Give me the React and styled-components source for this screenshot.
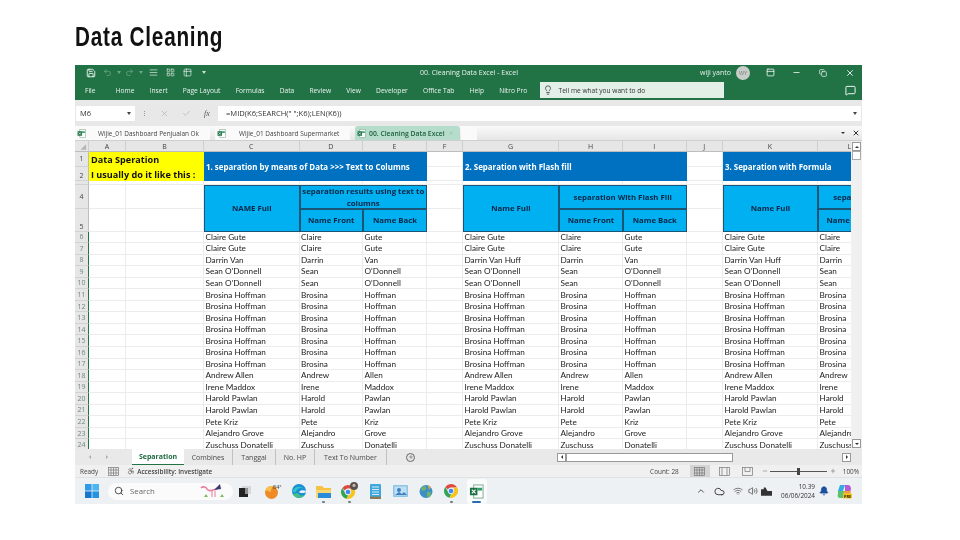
import styled, { createGlobalStyle } from 'styled-components';
import { Save, Undo2, Redo2, Lightbulb, MessageSquare, X, Minus, Check, Search, Bell, ChevronUp, Cloud, Wifi, Volume2, Plus, Copy, PanelTop, AlignJustify, Table2, LayoutGrid, Accessibility } from 'lucide-react';

const GlobalStyle = createGlobalStyle`
  html, body { margin: 0; padding: 0; background: #fff; }
  body { font-family: "Open Sans", "Noto Sans", sans-serif; color: #222; }
`;

const Page = styled.div`
  width: 960px;
  height: 540px;
  padding: 0 98px 0 75px;
  box-sizing: border-box;
  overflow: hidden;
`;

const Title = styled.h1`
  margin: 0;
  height: 65px;
  padding-top: 20px;
  box-sizing: border-box;
  font: bold 28px/34px "Liberation Sans", sans-serif;
`;

const TitleText = styled.span`
  display: inline-block;
  letter-spacing: 1.05px;
  color: #111;
  transform: scaleX(0.74);
  transform-origin: left center;
`;

const Win = styled.div`
  width: 787px;
  height: 439px;
  display: flex;
  flex-direction: column;
  overflow: hidden;
  filter: blur(0.35px);
`;

const TitleBar = styled.div`
  height: 15px;
  flex: none;
  display: flex;
  align-items: center;
  background: #217346;
  color: #e8f2ec;
  font-size: 7px;
`;

const QuickAccess = styled.div`
  width: 345px;
  flex: none;
  display: flex;
  align-items: center;
  padding-left: 8px;
  box-sizing: border-box;
`;

const QuickBtn = styled.div`
  width: ${({ $w }) => $w}px;
  flex: none;
  display: flex;
  align-items: center;
  justify-content: center;
`;

const WindowTitle = styled.div`
  flex: 1;
  white-space: nowrap;
`;

const WindowButtons = styled.div`
  display: flex;
  align-items: center;
  margin-right: -1px;
`;

const UserName = styled.span`
  margin-right: 5px;
  white-space: nowrap;
`;

const Avatar = styled.div`
  width: 14px;
  height: 14px;
  border-radius: 50%;
  background: #c9cdca;
  color: #7c807d;
  font-size: 5.5px;
  display: flex;
  align-items: center;
  justify-content: center;
  margin-right: 7px;
`;

const WinBtn = styled.div`
  width: 26.5px;
  display: flex;
  justify-content: center;
`;

const Ribbon = styled.div`
  height: 20px;
  flex: none;
  display: flex;
  align-items: center;
  gap: 15.2px;
  padding-left: 10px;
  background: #217346;
  color: #eaf3ee;
  font-size: 6.65px;
  white-space: nowrap;
`;

const FileTab = styled.span`
  margin-right: 5px;
`;

const TellMe = styled.div`
  width: 184px;
  height: 16px;
  margin-left: -3px;
  flex: none;
  display: flex;
  align-items: center;
  gap: 6px;
  padding-left: 3px;
  box-sizing: border-box;
  background: #e3f0e8;
  color: #333;
  font-size: 6.6px;
`;

const CommentSlot = styled.div`
  margin-left: auto;
  padding-right: 6px;
  display: flex;
`;

const FormulaRow = styled.div`
  height: 26px;
  flex: none;
  display: flex;
  align-items: center;
  background: #e8e8e8;
  padding: 0 1px;
  box-sizing: border-box;
`;

const NameBox = styled.div`
  width: 59px;
  height: 15px;
  background: #fff;
  display: flex;
  align-items: center;
  justify-content: space-between;
  padding: 0 4px;
  box-sizing: border-box;
  font-size: 7.5px;
  color: #333;
`;

const Caret = styled.span`
  width: 0;
  height: 0;
  border-left: 2.5px solid transparent;
  border-right: 2.5px solid transparent;
  border-top: 3px solid ${({ $color }) => $color || '#444'};
`;

const FormulaTools = styled.div`
  width: 83px;
  height: 15px;
  flex: none;
  display: flex;
  align-items: center;
  gap: 13px;
  padding-left: 9px;
  box-sizing: border-box;
  color: #b5b5b5;
`;

const Grip = styled.span`
  width: 1px;
  height: 5px;
  margin-right: 1px;
  border-left: 1px dotted #999;
`;

const FxLabel = styled.span`
  font: italic 8px "Liberation Serif", serif;
  color: #555;
`;

const FormulaInput = styled.div`
  flex: 1;
  height: 15px;
  background: #fff;
  display: flex;
  align-items: center;
  justify-content: space-between;
  padding: 0 4px 0 8px;
  font-size: 7.6px;
  color: #333;
`;

const TabStrip = styled.div`
  height: 15px;
  flex: none;
  display: flex;
  align-items: flex-end;
  background: linear-gradient(#fafafa, #e6e6e6);
  border-bottom: 1px solid #cfcfcf;
  box-sizing: border-box;
`;

const BookTab = styled.div`
  width: ${({ $w }) => $w}px;
  height: 14px;
  margin-right: ${({ $gap }) => $gap || 0}px;
  flex: none;
  display: flex;
  align-items: center;
  gap: ${({ $inner }) => $inner || 0}px;
  padding-left: 2px;
  box-sizing: border-box;
  background: ${({ $active }) => ($active ? '#b6dccb' : '#fafafa')};
  border-radius: 3px 3px 0 0;
  font-size: ${({ $active }) => ($active ? 6.8 : 6.45)}px;
  font-weight: ${({ $active }) => ($active ? 600 : 400)};
  color: ${({ $active }) => ($active ? '#1d5f3c' : '#444')};
  white-space: nowrap;
`;

const StripEnd = styled.div`
  margin-left: auto;
  height: 14px;
  display: flex;
  align-items: center;
  gap: 7px;
  padding-right: 2px;
`;

const Workarea = styled.div`
  height: 308px;
  flex: none;
  display: flex;
  background: #fff;
`;

const SheetClip = styled.div`
  width: 776px;
  overflow: hidden;
`;

const Sheet = styled.div`
  width: 905px;
  display: grid;
  grid-template-columns: 14px 37px 78px 95.5px 63.5px 64px 36px 96px 64px 63.5px 36.5px 95px 63.5px 64px;
  grid-template-rows: 11px 14.5px 14px 4.5px 24px 22.5px repeat(19, 11.55px);
  font-family: Lato, "Open Sans", sans-serif;
  font-size: 8.2px;
  color: #222;
`;

const ColHead = styled.div`
  background: #e6e6e6;
  border-right: 1px solid #cfcfcf;
  border-bottom: 1px solid #bdbdbd;
  display: flex;
  align-items: center;
  justify-content: center;
  font-family: "Open Sans", sans-serif;
  font-size: 7px;
  color: #444;
`;

const RowHead = styled.div`
  background: #e6e6e6;
  border-bottom: 1px solid #d2d2d2;
  border-right: ${({ $selected }) => ($selected ? '1px solid #217346' : '1px solid #bdbdbd')};
  display: flex;
  align-items: ${({ $low }) => ($low ? 'flex-end' : 'center')};
  justify-content: center;
  font-family: "Open Sans", sans-serif;
  font-size: 7px;
  line-height: 9px;
  color: ${({ $selected }) => ($selected ? '#6f8a7a' : '#444')};
  box-sizing: border-box;
`;

const Cell = styled.div`
  border-right: 1px solid #ececec;
  border-bottom: 1px solid #ececec;
  box-sizing: border-box;
  padding-left: 1.5px;
  display: flex;
  align-items: center;
  white-space: nowrap;
  overflow: hidden;
`;

const Note = styled.div`
  grid-column: span 2;
  grid-row: span 2;
  background: #ffff00;
  color: #111;
  font-family: "Open Sans", sans-serif;
  font-size: 9.1px;
  font-weight: 700;
  line-height: 15px;
  padding: 1px 2px 0;
  display: flex;
  flex-direction: column;
  justify-content: center;
  white-space: nowrap;
`;

const Banner = styled.div`
  grid-column: span ${({ $span }) => $span};
  grid-row: span 2;
  background: #0070c0;
  color: #fff;
  font-family: "Open Sans", sans-serif;
  font-size: 7.9px;
  font-weight: 700;
  padding: 1px 0 0 2px;
  display: flex;
  align-items: center;
  white-space: nowrap;
`;

const HeaderCell = styled.div`
  grid-column: span ${({ $cols }) => $cols || 1};
  grid-row: span ${({ $rows }) => $rows || 1};
  background: #00b0f0;
  border: 1px solid #1b5576;
  box-sizing: border-box;
  color: #0b2545;
  font-family: "Open Sans", sans-serif;
  font-size: 7.8px;
  font-weight: 700;
  line-height: 12px;
  display: flex;
  align-items: center;
  justify-content: center;
  text-align: center;
`;

const VScroll = styled.div`
  width: 11px;
  flex: none;
  display: flex;
  flex-direction: column;
  background: #f0f0f0;
  align-items: center;
  padding: 1px 0;
  box-sizing: border-box;
`;

const ArrowBtn = styled.div`
  width: 9px;
  height: 9px;
  flex: none;
  background: #fff;
  border: 0.5px solid #999;
  box-sizing: border-box;
  display: flex;
  align-items: center;
  justify-content: center;
`;

const VThumb = styled.div`
  width: 9px;
  height: 9px;
  background: #fff;
  border: 0.5px solid #aaa;
  box-sizing: border-box;
`;

const Spacer = styled.div`
  flex: 1;
`;

const Triangle = styled.span`
  width: 0;
  height: 0;
  ${({ $dir, $size = 2, $color = '#333' }) =>
    $dir === 'up'
      ? `border-left:${$size}px solid transparent;border-right:${$size}px solid transparent;border-bottom:${$size}px solid ${$color};`
      : $dir === 'down'
      ? `border-left:${$size}px solid transparent;border-right:${$size}px solid transparent;border-top:${$size}px solid ${$color};`
      : $dir === 'left'
      ? `border-top:${$size}px solid transparent;border-bottom:${$size}px solid transparent;border-right:${$size}px solid ${$color};`
      : `border-top:${$size}px solid transparent;border-bottom:${$size}px solid transparent;border-left:${$size}px solid ${$color};`}
`;

const SheetTabs = styled.div`
  height: 16px;
  flex: none;
  display: flex;
  align-items: center;
  background: #e9e9e9;
  font-size: 7px;
  color: #555;
`;

const TabNav = styled.div`
  width: 57px;
  flex: none;
  display: flex;
  align-items: center;
  gap: 15px;
  padding-left: 14px;
  box-sizing: border-box;
`;

const SheetTab = styled.div`
  width: ${({ $w }) => $w}px;
  height: 16px;
  flex: none;
  display: flex;
  align-items: center;
  justify-content: center;
  box-sizing: border-box;
  white-space: nowrap;
  background: ${({ $active }) => ($active ? '#fff' : 'transparent')};
  color: ${({ $active }) => ($active ? '#1f6b41' : '#4a4a4a')};
  font-weight: ${({ $active }) => ($active ? 700 : 400)};
  border-bottom: ${({ $active }) => ($active ? '1.5px solid #217346' : 'none')};
  border-right: ${({ $active }) => ($active ? 'none' : '1px solid #c0c0c0')};
  background-clip: padding-box;
`;

const AddSheet = styled.div`
  width: 9px;
  height: 9px;
  margin-left: 19px;
  flex: none;
  border: 0.5px solid #666;
  border-radius: 50%;
  display: flex;
  align-items: center;
  justify-content: center;
  box-sizing: border-box;
`;

const HScrollWrap = styled.div`
  width: 294px;
  margin-left: auto;
  height: 10px;
  margin-right: 11px;
  display: flex;
  align-items: center;
  flex: none;
`;

const HThumb = styled.div`
  width: 167px;
  height: 9px;
  background: #fff;
  border: 0.5px solid #999;
  box-sizing: border-box;
`;

const StatusBar = styled.div`
  height: 12px;
  flex: none;
  display: flex;
  align-items: center;
  background: #f0f0f0;
  font-size: 6.4px;
  color: #444;
  padding: 0 3px 0 5px;
  white-space: nowrap;
`;

const StatusNote = styled.span`
  margin-left: ${({ $left }) => ($left === undefined ? 'auto' : `${$left}px`)};
  flex: none;
  display: flex;
  align-items: center;
  gap: 2px;
  font-weight: ${({ $bold }) => ($bold ? 600 : 400)};
`;

const ViewBtn = styled.div`
  width: 20px;
  height: 12px;
  flex: none;
  margin-left: ${({ $left }) => $left || 0}px;
  background: ${({ $on }) => ($on ? '#d4d4d4' : 'transparent')};
  display: flex;
  align-items: center;
  justify-content: center;
`;

const ZoomSign = styled.span`
  margin-left: ${({ $left }) => $left}px;
  display: flex;
  color: #666;
`;

const ZoomBar = styled.div`
  width: 57px;
  height: 1px;
  flex: none;
  background: #555;
  margin: 0 3px 0 2px;
  display: flex;
  justify-content: center;
  align-items: center;
`;

const ZoomKnob = styled.div`
  width: 3px;
  height: 7px;
  flex: none;
  background: #444;
`;

const Taskbar = styled.div`
  flex: 1;
  display: flex;
  align-items: center;
  background: #eef1f4;
  border-top: 1px solid #e2e2e2;
  box-sizing: border-box;
`;

const StartSlot = styled.div`
  width: 33px;
  flex: none;
  display: flex;
  justify-content: flex-end;
  padding-right: 9px;
  box-sizing: border-box;
`;

const SearchPill = styled.div`
  width: 125px;
  height: 17px;
  flex: none;
  background: #fbfbfb;
  border-radius: 9px;
  display: flex;
  align-items: center;
  gap: 6px;
  padding-left: 6px;
  box-sizing: border-box;
  font-size: 7.8px;
  color: #666;
`;

const PillArt = styled.div`
  margin-left: auto;
  margin-right: 6px;
  display: flex;
`;

const AppSlot = styled.div`
  width: ${({ $w }) => $w || 25.4}px;
  height: 25px;
  flex: none;
  margin-left: ${({ $left }) => $left || 0}px;
  display: flex;
  flex-direction: column;
  align-items: center;
  justify-content: center;
  position: relative;
  background: ${({ $active }) => ($active ? '#fafcfb' : 'transparent')};
  border-radius: 3px;
`;

const RunDot = styled.span`
  position: absolute;
  bottom: 1px;
  width: ${({ $wide }) => ($wide ? 9 : 3)}px;
  height: 1.5px;
  border-radius: 1px;
  background: ${({ $wide }) => ($wide ? '#2b6cb0' : '#777')};
`;

const Tray = styled.div`
  margin-left: auto;
  display: flex;
  align-items: center;
  color: #333;
  padding-right: 10px;
`;

const TrayIcon = styled.div`
  width: ${({ $w }) => $w}px;
  margin-left: ${({ $left }) => $left || 0}px;
  flex: none;
  display: flex;
  justify-content: center;
`;

const Clock = styled.div`
  margin-left: 7px;
  text-align: right;
  font-size: 6.4px;
  line-height: 9.5px;
  color: #333;
  white-space: nowrap;
`;

const ExcelGlyph = ({ size = 9 }) => (
  <svg width={size} height={size} viewBox="0 0 16 16">
    <rect x="5" y="1" width="10" height="14" fill="#fff" stroke="#7aa98e" />
    <rect x="9" y="4" width="5" height="3" fill="#33a06a" />
    <rect x="1" y="4" width="8" height="8" fill="#1d7044" />
    <path d="M3 6l4 4M7 6l-4 4" stroke="#fff" strokeWidth="1.2" />
  </svg>
);

const WindowsLogo = () => (
  <svg width="14" height="14" viewBox="0 0 14 14">
    <rect width="6.6" height="6.6" fill="#2f9be6" />
    <rect x="7.4" width="6.6" height="6.6" fill="#4db5f0" />
    <rect y="7.4" width="6.6" height="6.6" fill="#1578cf" />
    <rect x="7.4" y="7.4" width="6.6" height="6.6" fill="#2493e0" />
  </svg>
);

const Flamingo = () => (
  <svg width="27" height="16" viewBox="0 0 27 16" fill="none">
    <path d="M1 5c2-2 5-1 6 1s3 2 6 1l4-1" stroke="#e87ba0" strokeWidth="1.6" />
    <path d="M12 8v6M15 8v6" stroke="#e87ba0" strokeWidth="1" />
    <path d="M14 7l6-6 1 5z" fill="#3b3a6b" />
    <path d="M4 14l2-3 2 3zM20 14l2-3 2 3z" fill="#7dbb5d" />
  </svg>
);

const DarkWindows = () => (
  <svg width="12" height="11" viewBox="0 0 12 11">
    <rect x="3" y="0" width="9" height="8" fill="#d8d8d8" />
    <rect x="0" y="2" width="9" height="9" fill="#222" />
    <rect x="6" y="2" width="3" height="6" fill="#8f8f8f" />
  </svg>
);

const Weather = () => (
  <svg width="18" height="17" viewBox="0 0 18 17">
    <circle cx="7.5" cy="9.5" r="6.5" fill="#f08a24" />
    <path d="M1.5 7a6.5 6.5 0 0 1 7-4l-2 6z" fill="#f8c04a" />
    <text x="9" y="6" fontSize="5.5" fill="#333" fontFamily="Open Sans">84°</text>
  </svg>
);

const Edge = () => (
  <svg width="14" height="14" viewBox="0 0 14 14">
    <circle cx="7" cy="7" r="7" fill="#1b8fd6" />
    <path d="M1 10c1 4 8 5 12 1-2 1-6 1-7-2z" fill="#47c27a" />
    <path d="M7 8c1-2 5-2 7-1 0 2-3 2-4 2-1 0-2 0-3-1z" fill="#eef1f4" />
    <path d="M1 8c0-5 7-7 11-3-3-2-7-1-8 3z" fill="#2cc5c9" />
  </svg>
);

const Folder = () => (
  <svg width="15" height="13" viewBox="0 0 15 13">
    <path d="M0 1h6l2 2h7v3H0z" fill="#f5c344" />
    <rect y="5" width="15" height="8" rx="1" fill="#f7d774" />
    <rect x="2" y="8" width="13" height="5" fill="#2a8bd8" />
  </svg>
);

const ChromeParts = () => (
  <>
    <path d="M7 0a7 7 0 0 1 6.1 3.5H7a3.5 3.5 0 0 0-3.2 2L1.3 2.9A7 7 0 0 1 7 0z" fill="#dd4b3e" />
    <path d="M1.3 2.9l3 5.2a3.5 3.5 0 0 0 3 2.4L5.5 13.8A7 7 0 0 1 1.3 2.9z" fill="#37a455" />
    <path d="M13.1 3.5A7 7 0 0 1 5.5 13.8l3-5.2a3.5 3.5 0 0 0 .6-5.1z" fill="#f5c518" />
    <circle cx="7" cy="7" r="2.8" fill="#4285f4" stroke="#fff" strokeWidth=".8" />
  </>
);

const Chrome = () => (
  <svg width="14" height="14" viewBox="0 0 14 14"><ChromeParts /></svg>
);

const ChromeBadged = () => (
  <svg width="18" height="18" viewBox="0 0 18 18">
    <g transform="translate(0 3)"><ChromeParts /></g>
    <circle cx="13" cy="4" r="4" fill="#5a5150" />
    <circle cx="13" cy="3.4" r="1.6" fill="#c9b9a8" />
  </svg>
);

const Notes = () => (
  <svg width="11" height="15" viewBox="0 0 11 15">
    <rect width="11" height="15" rx="1" fill="#3fa7dc" />
    <path d="M2 3h7M2 5.5h7M2 8h7M2 10.5h7" stroke="#e6f4fb" strokeWidth=".9" />
    <rect y="12.6" width="11" height="2.4" fill="#8a7a55" />
  </svg>
);

const Picture = () => (
  <svg width="15" height="12" viewBox="0 0 15 12">
    <rect width="15" height="12" rx="1" fill="#8ec4e6" />
    <rect x="1.5" y="1.5" width="12" height="9" fill="#bfe0f2" />
    <circle cx="6" cy="5" r="2" fill="#3f7fc4" />
    <path d="M2 10l4-3 3 2 2-2 3 3z" fill="#3f7fc4" />
  </svg>
);

const GlobeApp = () => (
  <svg width="14" height="15" viewBox="0 0 14 15">
    <circle cx="7" cy="7.5" r="6.5" fill="#3d8fc8" />
    <path d="M3 3c3-2 5 0 4 2S3 7 2 6zM8 8c2-1 5 0 4 3s-3 3-4 1z" fill="#6fb36a" />
    <path d="M9 1l3 2-2 3z" fill="#e6a84a" />
  </svg>
);

const Copilot = () => (
  <svg width="15" height="15" viewBox="0 0 15 15">
    <path d="M3 1h5L6 7H1z" fill="#38a9e8" />
    <path d="M8 1h3c2 0 3 2 3 4l-1 3H8z" fill="#b65bd6" />
    <path d="M1 7h6l-1 7H3c-2 0-3-2-2-4z" fill="#5cc26f" />
    <path d="M7 7h7l-1 4c-1 2-2 3-4 3H6z" fill="#f0a03c" />
    <rect x="6" y="9.5" width="9" height="5" rx="1" fill="#f5c518" />
    <text x="7" y="13.5" fontSize="3.8" fontWeight="700" fill="#222" fontFamily="Open Sans">PRE</text>
  </svg>
);

const Battery = () => (
  <svg width="11" height="9" viewBox="0 0 12 9">
    <path d="M3 0v2H0v7h12V4H7L5 0z" fill="#333" />
  </svg>
);

const CornerMark = () => (
  <svg width="14" height="11" viewBox="0 0 14 11">
    <path d="M12 3v6H6z" fill="#b4b4b4" />
  </svg>
);

const GridIcon = ({ cols = 4, color = '#777' }) => (
  <svg width="11" height="9" viewBox="0 0 11 9" fill="none" stroke={color} strokeWidth=".7">
    <rect x=".5" y=".5" width="10" height="8" />
    {cols === 4 && <path d="M3 .5v8M5.5 .5v8M8 .5v8M.5 3h10M.5 6h10" />}
    {cols === 2 && <path d="M3 .5v8M8 .5v8" />}
    {cols === 1 && <path d="M3 .5v4h5v-4" />}
  </svg>
);

const columns = ['A', 'B', 'C', 'D', 'E', 'F', 'G', 'H', 'I', 'J', 'K', 'L', 'M'];

const rowsData = [
  ['Claire Gute', 'Claire', 'Gute'],
  ['Claire Gute', 'Claire', 'Gute'],
  ['Darrin Van', 'Darrin', 'Van', 'Darrin Van Huff'],
  ["Sean O'Donnell", 'Sean', "O'Donnell"],
  ["Sean O'Donnell", 'Sean', "O'Donnell"],
  ...Array(7).fill(['Brosina Hoffman', 'Brosina', 'Hoffman']),
  ['Andrew Allen', 'Andrew', 'Allen'],
  ['Irene Maddox', 'Irene', 'Maddox'],
  ['Harold Pawlan', 'Harold', 'Pawlan'],
  ['Harold Pawlan', 'Harold', 'Pawlan'],
  ['Pete Kriz', 'Pete', 'Kriz'],
  ['Alejandro Grove', 'Alejandro', 'Grove'],
  ['Zuschuss Donatelli', 'Zuschuss', 'Donatelli'],
];

function DataRow({ n, full, first, last, longFull }) {
  return (
    <>
      <RowHead $selected>{n}</RowHead>
      <Cell />
      <Cell />
      <Cell>{full}</Cell>
      <Cell>{first}</Cell>
      <Cell>{last}</Cell>
      <Cell />
      <Cell>{longFull}</Cell>
      <Cell>{first}</Cell>
      <Cell>{last}</Cell>
      <Cell />
      <Cell>{longFull}</Cell>
      <Cell>{first}</Cell>
      <Cell>{last}</Cell>
    </>
  );
}

function SheetGrid() {
  return (
    <Sheet>
      <ColHead><CornerMark /></ColHead>
      {columns.map(c => <ColHead key={c}>{c}</ColHead>)}

      <RowHead>1</RowHead>
      <Note>
        <span>Data Speration</span>
        <span>I usually do it like this :</span>
      </Note>
      <Banner $span={3}>1. separation by means of Data &gt;&gt;&gt; Text to Columns</Banner>
      <Cell />
      <Banner $span={3}>2. Separation with Flash fill</Banner>
      <Cell />
      <Banner $span={3}>3. Separation with Formula</Banner>

      <RowHead $low>2</RowHead>
      <Cell />
      <Cell />

      <RowHead />
      {columns.map(c => <Cell key={c} />)}

      <RowHead>4</RowHead>
      <Cell />
      <Cell />
      <HeaderCell $rows={2}>NAME Full</HeaderCell>
      <HeaderCell $cols={2}>separation results using text to columns</HeaderCell>
      <Cell />
      <HeaderCell $rows={2}>Name Full</HeaderCell>
      <HeaderCell $cols={2}>separation With Flash Fill</HeaderCell>
      <Cell />
      <HeaderCell $rows={2}>Name Full</HeaderCell>
      <HeaderCell $cols={2}>separation With Formula</HeaderCell>

      <RowHead $low>5</RowHead>
      <Cell />
      <Cell />
      <HeaderCell>Name Front</HeaderCell>
      <HeaderCell>Name Back</HeaderCell>
      <Cell />
      <HeaderCell>Name Front</HeaderCell>
      <HeaderCell>Name Back</HeaderCell>
      <Cell />
      <HeaderCell>Name Front</HeaderCell>
      <HeaderCell>Name Back</HeaderCell>

      {rowsData.map(([full, first, last, longFull], i) => (
        <DataRow key={i} n={i + 6} full={full} first={first} last={last} longFull={longFull || full} />
      ))}
    </Sheet>
  );
}

export default function App() {
  return (
    <Page>
      <GlobalStyle />
      <Title><TitleText>Data Cleaning</TitleText></Title>
      <Win>
        <TitleBar>
          <QuickAccess>
            <QuickBtn $w={15}><Save size={10} color="#fff" /></QuickBtn>
            <QuickBtn $w={18}><Undo2 size={9} color="#6fa588" /></QuickBtn>
            <QuickBtn $w={5}><Caret $color="#6fa588" /></QuickBtn>
            <QuickBtn $w={17}><Redo2 size={9} color="#6fa588" /></QuickBtn>
            <QuickBtn $w={5}><Caret $color="#6fa588" /></QuickBtn>
            <QuickBtn $w={20}><AlignJustify size={9} color="#cfe2d7" /></QuickBtn>
            <QuickBtn $w={15}><LayoutGrid size={9} color="#cfe2d7" /></QuickBtn>
            <QuickBtn $w={18}><Table2 size={9} color="#cfe2d7" /></QuickBtn>
            <QuickBtn $w={15}><Caret $color="#cfe2d7" /></QuickBtn>
          </QuickAccess>
          <WindowTitle>00. Cleaning Data Excel  -  Excel</WindowTitle>
          <WindowButtons>
            <UserName>wiji yanto</UserName>
            <Avatar>WY</Avatar>
            <WinBtn><PanelTop size={9} color="#fff" /></WinBtn>
            <WinBtn><Minus size={9} color="#fff" /></WinBtn>
            <WinBtn><Copy size={8} color="#fff" /></WinBtn>
            <WinBtn><X size={10} color="#fff" /></WinBtn>
          </WindowButtons>
        </TitleBar>
        <Ribbon>
          <FileTab>File</FileTab>
          <span>Home</span>
          <span>Insert</span>
          <span>Page Layout</span>
          <span>Formulas</span>
          <span>Data</span>
          <span>Review</span>
          <span>View</span>
          <span>Developer</span>
          <span>Office Tab</span>
          <span>Help</span>
          <span>Nitro Pro</span>
          <TellMe>
            <Lightbulb size={10} color="#444" />
            Tell me what you want to do
          </TellMe>
          <CommentSlot><MessageSquare size={11} color="#fff" /></CommentSlot>
        </Ribbon>
        <FormulaRow>
          <NameBox>M6<Caret /></NameBox>
          <FormulaTools>
            <Grip />
            <X size={9} />
            <Check size={9} />
            <FxLabel>fx</FxLabel>
          </FormulaTools>
          <FormulaInput>
            =MID(K6;SEARCH(" ";K6);LEN(K6))
            <Caret />
          </FormulaInput>
        </FormulaRow>
        <TabStrip>
          <BookTab $w={135} $gap={5} $inner={12}><ExcelGlyph />Wijie_01 Dashboard Penjualan Ok</BookTab>
          <BookTab $w={135} $gap={5} $inner={13}><ExcelGlyph />Wijie_01 Dashboard Supermarket</BookTab>
          <BookTab $w={105} $gap={1} $inner={3} $active>
            <ExcelGlyph />00. Cleaning Data Excel
            <X size={6} color="#8fb8a4" />
          </BookTab>
          <BookTab $w={16} />
          <StripEnd>
            <Triangle $dir="down" $size={2.5} />
            <X size={8} color="#333" strokeWidth={3} />
          </StripEnd>
        </TabStrip>
        <Workarea>
          <SheetClip><SheetGrid /></SheetClip>
          <VScroll>
            <ArrowBtn><Triangle $dir="up" /></ArrowBtn>
            <VThumb />
            <Spacer />
            <ArrowBtn><Triangle $dir="down" /></ArrowBtn>
          </VScroll>
        </Workarea>
        <SheetTabs>
          <TabNav>
            <Triangle $dir="left" $color="#aaa" />
            <Triangle $dir="right" $color="#aaa" />
          </TabNav>
          <SheetTab $w={52} $active>Separation</SheetTab>
          <SheetTab $w={49}>Combines</SheetTab>
          <SheetTab $w={43}>Tanggal</SheetTab>
          <SheetTab $w={39}>No. HP</SheetTab>
          <SheetTab $w={72}>Text To Number</SheetTab>
          <AddSheet><Plus size={6} color="#555" /></AddSheet>
          <HScrollWrap>
            <ArrowBtn><Triangle $dir="left" /></ArrowBtn>
            <HThumb />
            <Spacer />
            <ArrowBtn><Triangle $dir="right" /></ArrowBtn>
          </HScrollWrap>
        </SheetTabs>
        <StatusBar>
          <span>Ready</span>
          <StatusNote $left={10}><GridIcon /></StatusNote>
          <StatusNote $left={8} $bold>
            <Accessibility size={8} color="#555" />Accessibility: Investigate
          </StatusNote>
          <StatusNote>Count: 28</StatusNote>
          <ViewBtn $left={11} $on><GridIcon /></ViewBtn>
          <ViewBtn $left={5}><GridIcon cols={2} /></ViewBtn>
          <ViewBtn $left={3}><GridIcon cols={1} /></ViewBtn>
          <ZoomSign $left={4}><Minus size={6} /></ZoomSign>
          <ZoomBar><ZoomKnob /></ZoomBar>
          <ZoomSign $left={0}><Plus size={6} /></ZoomSign>
          <StatusNote $left={7}>100%</StatusNote>
        </StatusBar>
        <Taskbar>
          <StartSlot><WindowsLogo /></StartSlot>
          <SearchPill>
            <Search size={10} color="#333" />
            Search
            <PillArt><Flamingo /></PillArt>
          </SearchPill>
          <AppSlot $w={24}><DarkWindows /></AppSlot>
          <AppSlot $w={32}><Weather /></AppSlot>
          <AppSlot $w={20}><Edge /></AppSlot>
          <AppSlot $w={28}><Folder /><RunDot /></AppSlot>
          <AppSlot><ChromeBadged /><RunDot /></AppSlot>
          <AppSlot><Notes /></AppSlot>
          <AppSlot><Picture /></AppSlot>
          <AppSlot><GlobeApp /></AppSlot>
          <AppSlot><Chrome /><RunDot /></AppSlot>
          <AppSlot $w={20} $left={3} $active><ExcelGlyph size={15} /><RunDot $wide /></AppSlot>
          <Tray>
            <TrayIcon $w={18}><ChevronUp size={10} /></TrayIcon>
            <TrayIcon $w={18}><Cloud size={11} /></TrayIcon>
            <TrayIcon $w={19}><Wifi size={10} color="#666" /></TrayIcon>
            <TrayIcon $w={11}><Volume2 size={10} color="#555" /></TrayIcon>
            <TrayIcon $w={16}><Battery /></TrayIcon>
            <Clock>10.39<br />06/06/2024</Clock>
            <TrayIcon $w={10} $left={4}><Bell size={10} color="#1d4fa0" fill="#1d4fa0" /></TrayIcon>
            <TrayIcon $w={15} $left={8}><Copilot /></TrayIcon>
          </Tray>
        </Taskbar>
      </Win>
    </Page>
  );
}
